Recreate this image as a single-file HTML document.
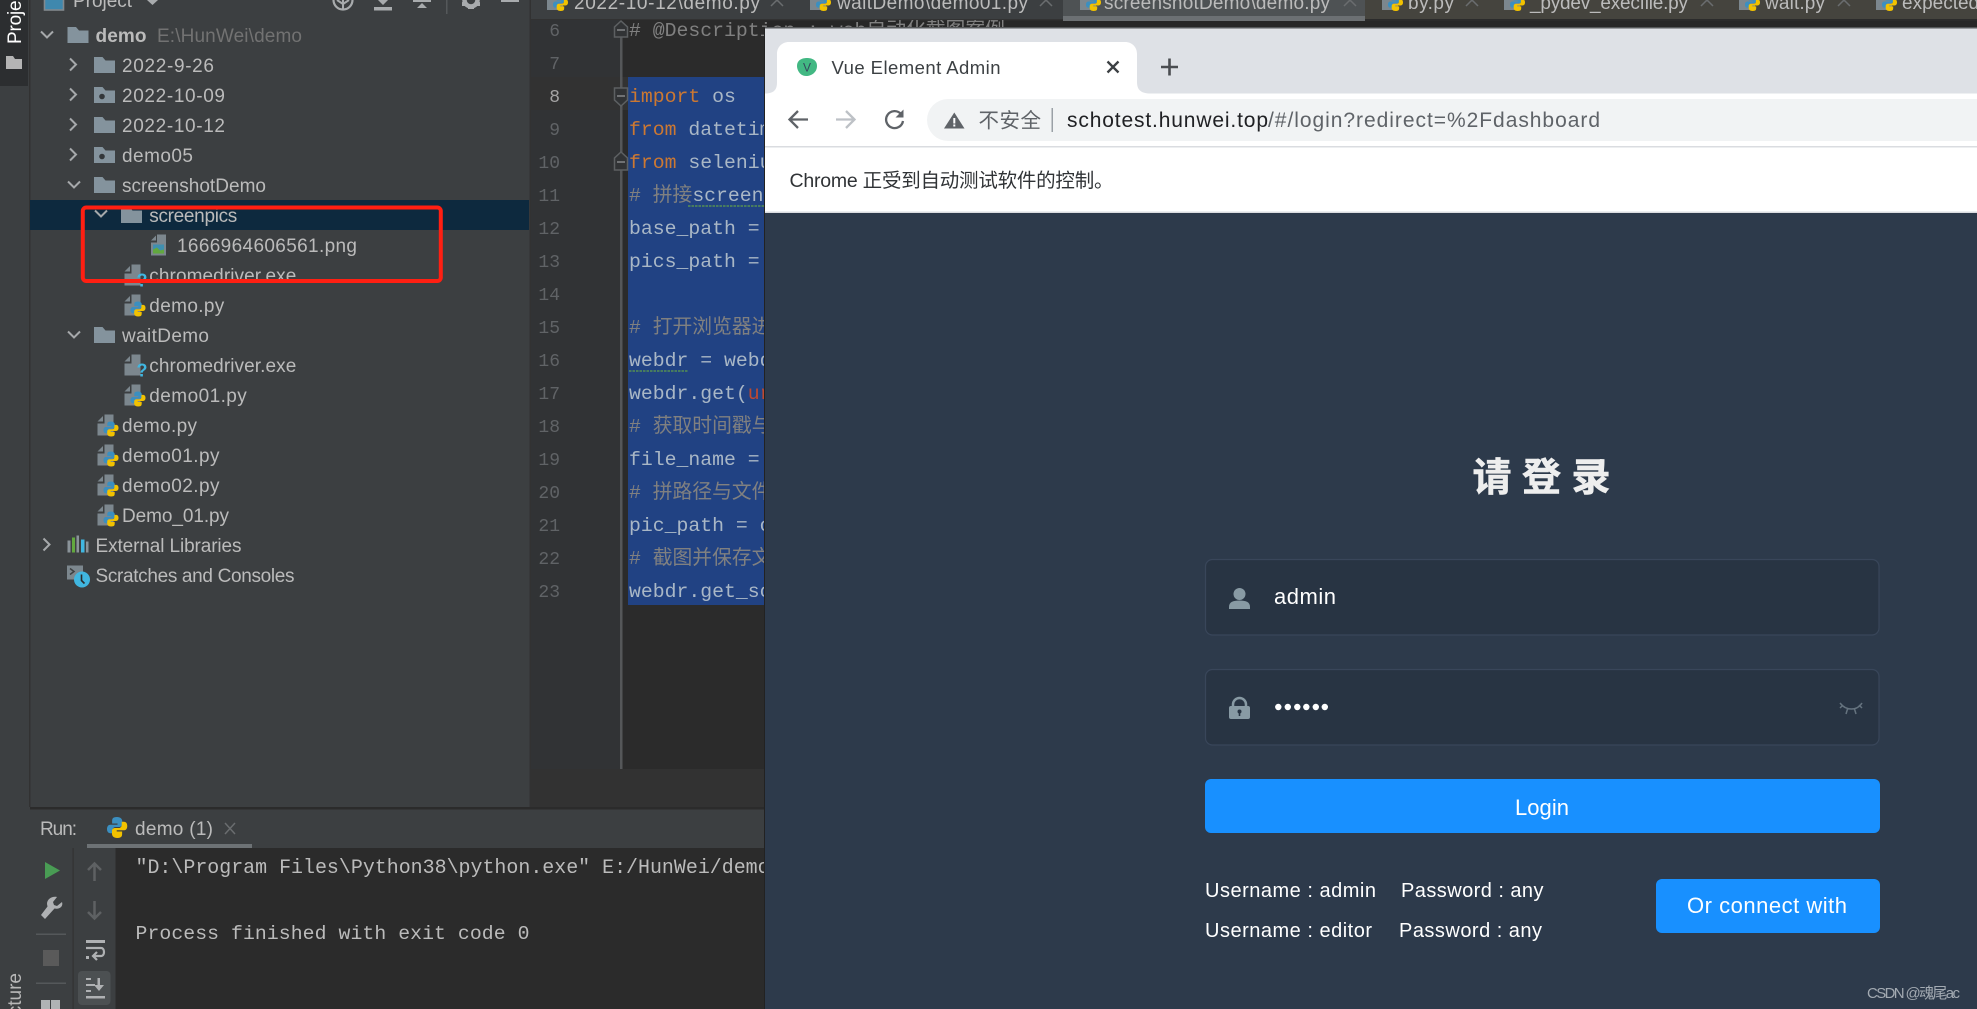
<!DOCTYPE html>
<html lang="zh">
<head>
<meta charset="utf-8">
<title>Vue Element Admin</title>
<style>
html,body{margin:0;padding:0;background:#3c3f41;width:1977px;height:1009px;overflow:hidden}
svg{display:block}
text{white-space:pre}
.s{font-family:"Liberation Sans","Noto Sans CJK SC",sans-serif}
.m{font-family:"Liberation Mono","Noto Sans CJK SC",monospace;font-size:19.8px}
.t{font-size:19px;fill:#bbbbbb}
.n{font-family:"Liberation Mono",monospace;font-size:18px;fill:#606366;text-anchor:end}
.c{fill:#a9b7c6}.k{fill:#cc7832}.g{fill:#808080}
</style>
</head>
<body>
<svg width="1977" height="1009" viewBox="0 0 1977 1009" xmlns="http://www.w3.org/2000/svg">
<defs>
<g id="logo">
<path fill="#3b8fc0" d="M7.4 0C4 0 3.8 1.5 3.8 3v1.6h4v.9H2.5C1 5.5 0 6.6 0 8.6c0 2 1 3 2.5 3h1.6V9.4c0-1.3 1-2.3 2.2-2.3h3c1.1 0 2-1 2-2V3c0-1.6-1.300-3-3.900-3z"/>
<path fill="#f2c200" transform="rotate(180 7.500 7.500)" d="M7.400 0C4 0 3.800 1.500 3.800 3v1.600h4v.9H2.500C1 5.500 0 6.600 0 8.600c0 2 1 3 2.500 3h1.600V9.400c0-1.300 1-2.300 2.200-2.300h3c1.100 0 2-1 2-2V3c0-1.600-1.300-3-3.900-3z"/>
</g>
<g id="file"><path fill="#7c878e" d="M7 0h9v21H0V9h7z"/><path fill="#7c878e" d="M0 7l5.500-5.500V7z"/></g>
<g id="py"><use href="#file"/><use href="#logo" transform="translate(6 7)"/></g>
<g id="q"><use href="#file"/><text x="12" y="22" class="s" font-size="18" font-weight="bold" fill="#40b6e0">?</text></g>
<path id="fo" fill="#84939d" d="M0 0h8.500l3 3.500H21V16H0z"/>
<g id="fd"><use href="#fo"/><circle cx="8" cy="9.500" r="2.800" fill="#33373a"/></g>
<path id="dn" fill="none" stroke="#a6a9ab" stroke-width="2" d="M-6-3L0 3L6-3"/>
<path id="rt" fill="none" stroke="#a6a9ab" stroke-width="2" d="M-3-6L3 0L-3 6"/>
</defs>

<rect width="1977" height="1009" fill="#3c3f41"/>
<rect x="0" y="0" width="28" height="86" fill="#2c2e30"/>
<rect x="29" y="0" width="1.500" height="807" fill="#323232"/>
<text class="s" font-size="19" fill="#ffffff" textLength="58" transform="translate(21 44) rotate(-90)">Project</text>
<path fill="#b4b4b4" d="M6 56h7l2 3h7v10H6z"/>
<text class="s" font-size="19" fill="#b8b8b8" text-anchor="end" transform="translate(21 973) rotate(-90)">Structure</text>

<!-- project header -->
<rect x="44.500" y="-8" width="19" height="18" fill="#3f88ae" stroke="#82898e" stroke-width="1.600"/>
<text x="73" y="7" class="s t" textLength="59">Project</text>
<path fill="#a8abad" d="M147 0h11l-5.500 5z"/>
<circle cx="343" cy="0" r="9.500" fill="none" stroke="#a8abad" stroke-width="2.200"/><path fill="none" stroke="#a8abad" stroke-width="2" d="M343 0v10M337 0L343 4L349 0"/>
<path fill="#a8abad" d="M378 0h10l-5 5zM374 7h18v3.500H374z"/>
<path fill="#a8abad" d="M413 0h18v2H413zM417 8l5-5 5 5z"/>
<rect x="446" y="0" width="1.500" height="14" fill="#55585a"/>
<circle cx="471" cy="0" r="6.500" fill="none" stroke="#a8abad" stroke-width="4.500"/><path fill="#a8abad" d="M468 5h6v4h-6zM476 3l4-1 0 4-3 0zM466 3l-4-1 0 4 3 0z"/>
<rect x="501" y="0" width="18" height="2" fill="#a8abad"/>

<!-- tree -->
<rect x="30" y="200" width="499" height="30" fill="#0d293e"/>
<g transform="translate(0 -0.5)">
<use href="#dn" x="47" y="35"/><use href="#fo" x="67.500" y="27.500"/>
<text x="95.500" y="42.500" class="s t" font-weight="bold" textLength="51">demo</text>
<text x="157" y="42.500" class="s t" style="fill:#727272" textLength="145">E:\HunWei\demo</text>

<use href="#rt" x="73" y="65"/><use href="#fo" x="94" y="57.500"/>
<text x="122" y="72.500" class="s t" textLength="92">2022-9-26</text>
<use href="#rt" x="73" y="95"/><use href="#fd" x="94" y="87.500"/>
<text x="122" y="102.500" class="s t" textLength="103">2022-10-09</text>
<use href="#rt" x="73" y="125"/><use href="#fo" x="94" y="117.500"/>
<text x="122" y="132.500" class="s t" textLength="103">2022-10-12</text>
<use href="#rt" x="73" y="155"/><use href="#fd" x="94" y="147.500"/>
<text x="122" y="162.500" class="s t" textLength="71">demo05</text>
<use href="#dn" x="74" y="185"/><use href="#fo" x="94" y="177.500"/>
<text x="122" y="192.500" class="s t" textLength="144">screenshotDemo</text>
<use href="#dn" x="101" y="214"/><use href="#fo" x="121" y="207.500"/>
<text x="149.300" y="222.500" class="s t" textLength="88">screenpics</text>
<path fill="#7c878e" d="M157 235h9v21h-15v-13h6z"/>
<path fill="#7c878e" d="M151 241l5-5v5z"/>
<rect x="153" y="245" width="11" height="9" fill="#3f8fb0"/><path fill="#62a83f" d="M153 254v-4l4-2 3 3 4-1v4z"/>
<text x="177" y="252.500" class="s t" textLength="180">1666964606561.png</text>
<use href="#q" x="124.500" y="265"/>
<text x="149.300" y="282.500" class="s t" textLength="147">chromedriver.exe</text>
<use href="#py" x="124.500" y="295"/>
<text x="149.300" y="312.500" class="s t" textLength="75">demo.py</text>
<use href="#dn" x="74" y="335"/><use href="#fo" x="94" y="327.500"/>
<text x="122" y="342.500" class="s t" textLength="87">waitDemo</text>
<use href="#q" x="124.500" y="355"/>
<text x="149.300" y="372.500" class="s t" textLength="147">chromedriver.exe</text>
<use href="#py" x="124.500" y="385"/>
<text x="149.300" y="402.500" class="s t" textLength="97.500">demo01.py</text>
<use href="#py" x="97.500" y="415"/>
<text x="122" y="432.500" class="s t" textLength="75">demo.py</text>
<use href="#py" x="97.500" y="445"/>
<text x="122" y="462.500" class="s t" textLength="97.500">demo01.py</text>
<use href="#py" x="97.500" y="475"/>
<text x="122" y="492.500" class="s t" textLength="97.500">demo02.py</text>
<use href="#py" x="97.500" y="505"/>
<text x="122" y="522.500" class="s t" textLength="107">Demo_01.py</text>
<use href="#rt" x="46.500" y="545"/>
<path fill="#8a9399" d="M67.500 541h3v12h-3zM82 541h2v12h-2zM86 542h2.500v11H86z"/><rect x="72" y="538" width="3" height="15" fill="#62a83f"/><rect x="76.500" y="536" width="2.500" height="17" fill="#8a9399"/><rect x="81" y="540" width="3.500" height="13" fill="#40b6e0"/>
<text x="95.500" y="552.500" class="s t" textLength="146">External Libraries</text>
<path fill="#7c878e" d="M67 566h16v9h-6v5H67z"/><path fill="none" stroke="#3c3f41" stroke-width="1.500" d="M70 569l4 3-4 3"/>
<circle cx="82" cy="580" r="8" fill="#40b6e0"/><path fill="none" stroke="#2b2b2b" stroke-width="1.600" d="M81.500 575v6l3 3"/>
<text x="95.500" y="582.500" class="s t" textLength="199">Scratches and Consoles</text>
</g>
<!-- red annotation -->
<rect x="82.800" y="207.500" width="358" height="73.500" rx="3.500" fill="none" stroke="#ff1f12" stroke-width="4"/>

<!-- editor -->
<rect x="530" y="19" width="1447" height="790" fill="#2b2b2b"/>
<rect x="765" y="21" width="1212" height="7" fill="#272727"/>
<rect x="530" y="19" width="90" height="750" fill="#313335"/>
<rect x="621" y="77" width="7" height="33" fill="#323232"/>
<rect x="530" y="77" width="90" height="33" fill="#323232"/>
<rect x="530" y="769" width="235" height="38" fill="#323232"/>
<rect x="620" y="37" width="2.500" height="732" fill="#555759"/>
<rect x="628" y="77" width="140" height="528" fill="#214283"/>

<g class="n">
<text x="560" y="36" class="n">6</text><text x="560" y="69" class="n">7</text><text x="560" y="102" class="n" style="fill:#a4a3a3">8</text><text x="560" y="135" class="n">9</text><text x="560" y="168" class="n">10</text><text x="560" y="201" class="n">11</text><text x="560" y="234" class="n">12</text><text x="560" y="267" class="n">13</text><text x="560" y="300" class="n">14</text><text x="560" y="333" class="n">15</text><text x="560" y="366" class="n">16</text><text x="560" y="399" class="n">17</text><text x="560" y="432" class="n">18</text><text x="560" y="465" class="n">19</text><text x="560" y="498" class="n">20</text><text x="560" y="531" class="n">21</text><text x="560" y="564" class="n">22</text><text x="560" y="597" class="n">23</text>
</g>
<g fill="#313335" stroke="#5d6062" stroke-width="1.500">
<path d="M614.500 37V27l6.500-6 6.500 6v10z"/>
<path d="M614.500 88v12l6.500 6 6.500-6V88z"/>
<path d="M614.500 170v-12l6.500-6 6.500 6v12z"/>
</g>
<path stroke="#85888a" stroke-width="1.500" d="M617 30h8M617 96h8M617 162h8"/>

<g class="m">
<text x="629" y="36" class="m g"># @Description : web自动化截图案例</text>
<text x="629" y="102" class="m c"><tspan class="k">import</tspan> os</text>
<text x="629" y="135" class="m c"><tspan class="k">from</tspan> datetime import datetime</text>
<text x="629" y="168" class="m c"><tspan class="k">from</tspan> selenium import webdriver</text>
<text x="629" y="201" class="m g"># 拼接<tspan class="c">screenpics</tspan></text>
<text x="629" y="234" class="m c">base_path = os.path</text>
<text x="629" y="267" class="m c">pics_path = os.path</text>
<text x="629" y="333" class="m g"># 打开浏览器进入</text>
<text x="629" y="366" class="m c">webdr = webdriver</text>
<text x="629" y="399" class="m c">webdr.get(<tspan fill="#c0492f">url</tspan>)</text>
<text x="629" y="432" class="m g"># 获取时间戳与</text>
<text x="629" y="465" class="m c">file_name = str</text>
<text x="629" y="498" class="m g"># 拼路径与文件</text>
<text x="629" y="531" class="m c">pic_path = os.path</text>
<text x="629" y="564" class="m g"># 截图并保存文件</text>
<text x="629" y="597" class="m c">webdr.get_screenshot</text>
</g>
<path fill="none" stroke="#5f9e4a" stroke-width="1.200" stroke-dasharray="2.500 1" d="M688 206H765M629 371H688"/>

<!-- editor tabs -->
<rect x="530" y="0" width="533" height="19" fill="#3c3f41"/>
<rect x="1063" y="0" width="302" height="16" fill="#4e5254"/>
<rect x="1063" y="16" width="302" height="5" fill="#6c7073"/>
<rect x="1365" y="0" width="612" height="19" fill="#45443e"/>
<rect x="530" y="19" width="533" height="1" fill="#323232"/>
<rect x="529.500" y="0" width="1.500" height="807" fill="#323232"/>
<g>
<use href="#py" x="547" y="-11"/><text x="574" y="9" class="s t" textLength="186">2022-10-12\demo.py</text>
<use href="#py" x="810" y="-11"/><text x="837" y="9" class="s t" textLength="191">waitDemo\demo01.py</text>
<use href="#py" x="1080" y="-11"/><text x="1104" y="9" class="s t" textLength="226">screenshotDemo\demo.py</text>
<use href="#py" x="1382" y="-11"/><text x="1408" y="9" class="s t" textLength="46">by.py</text>
<use href="#py" x="1504" y="-11"/><text x="1530" y="9" class="s t" textLength="158">_pydev_execfile.py</text>
<use href="#py" x="1739" y="-11"/><text x="1765" y="9" class="s t" textLength="60">wait.py</text>
<use href="#py" x="1876" y="-11"/><text x="1902" y="9" class="s t">expected</text>
</g>
<path fill="none" stroke="#6a6d6f" stroke-width="1.500" d="M771 6l6-6 6 6M1040 6l6-6 6 6M1344 6l6-6 6 6M1466 6l6-6 6 6M1701 6l6-6 6 6M1838 6l6-6 6 6"/>

<!-- run panel -->
<rect x="30" y="807" width="735" height="2.500" fill="#2b2b2b"/>
<rect x="30" y="809.500" width="735" height="200" fill="#3c3f41"/>
<text x="40" y="835" class="s t" textLength="37">Run:</text>
<use href="#logo" transform="translate(107 817) scale(1.350 1.400)"/>
<text x="135" y="835" class="s t" textLength="78">demo (1)</text>
<path stroke="#6a6d6f" stroke-width="1.500" d="M225 823l10 11M235 823l-10 11"/>
<rect x="87" y="844" width="165" height="4" fill="#6d7275"/>
<rect x="72.500" y="848" width="1.200" height="161" fill="#323232"/>
<rect x="115.500" y="848" width="650" height="161" fill="#2b2b2b"/>
<path fill="#499c54" d="M45 862l15 8.500-15 8.500z"/>
<path fill="#afb1b3" d="M62 902l-5 4-3-1-1-3 4-5c-5-1-10 2-10 7l.5 2.500L41 915l4 4 9.500-10.500c5 1 9-2 7.500-6.500z"/>
<rect x="36" y="933.500" width="30" height="1.500" fill="#55585a"/>
<rect x="43" y="950" width="16" height="16" fill="#5a5a5a"/>
<rect x="36" y="982.500" width="30" height="1.500" fill="#55585a"/>
<path fill="#b0b3b5" d="M41 1000h9v9h-9zM51 1000h9v9h-9z"/>
<path fill="none" stroke="#5e6163" stroke-width="2.500" d="M94.500 881v-17M88 870l6.500-6.500 6.500 6.500M94.500 901v17M88 912l6.500 6.500 6.500-6.500"/>
<path fill="#afb1b3" d="M86 940h19v3H86zM86 956h3v3h-3z"/>
<path fill="none" stroke="#afb1b3" stroke-width="2.200" d="M86 948h15c4 0 4 8 0 8h-8M97 952l-4 4 4 4"/>
<rect x="78" y="971" width="32.500" height="34" rx="4" fill="#4c5052"/>
<path fill="#afb1b3" d="M86 978h5v2h-5zM86 984h9v2h-9zM86 990h5v2h-5zM86 996h19v2.500H86z"/>
<path fill="#afb1b3" d="M97.500 978h2.500v7h4l-5 6-5-6h3.500z"/>
<text x="135.500" y="873" class="m" style="fill:#bbbbbb;font-size:19.95px">"D:\Program Files\Python38\python.exe" E:/HunWei/demo</text>
<text x="135.500" y="939" class="m" style="fill:#bbbbbb" textLength="394">Process finished with exit code 0</text>
<rect x="764" y="28" width="1.200" height="981" fill="#222"/>

<!-- browser -->
<rect x="765" y="27" width="1212" height="1.500" fill="#55585a"/>
<rect x="765" y="28.500" width="1212" height="65" fill="#dee1e6"/>
<path fill="#ffffff" d="M765 93.500c8 0 12-3 12-11V54c0-7 5-12 12-12h336c7 0 12 5 12 12v28c0 8 4 11 12 11.500z"/>
<path fill="#42b883" d="M807 58c5 0 10 2 10 8 0 6-5 10-11 10-6 0-9-6-9-10 0-6 5-8 10-8z"/>
<text x="803" y="71.500" class="s" font-size="12" fill="#35495e">V</text>
<text x="831.500" y="74" class="s" font-size="18.500" fill="#3c4043" textLength="169">Vue Element Admin</text>
<path stroke="#3c4043" stroke-width="2.300" d="M1107.500 61.500l11 11M1118.500 61.500l-11 11"/>
<path stroke="#4a4d51" stroke-width="2.600" d="M1161 67h17M1169.500 58.500v17"/>

<rect x="765" y="93.500" width="1212" height="53" fill="#ffffff"/>
<rect x="765" y="146" width="1212" height="1.500" fill="#dadce0"/>
<path d="M948 99H1977V141H948a21 21 0 0 1 0-42z" fill="#f1f3f4"/>
<path fill="none" stroke="#5f6368" stroke-width="2.300" d="M808 119.500H790M798 111l-8.500 8.500L798 128"/>
<path fill="none" stroke="#bdc1c6" stroke-width="2.300" d="M836 119.500h18M846 111l8.500 8.500L846 128"/>
<path fill="none" stroke="#5f6368" stroke-width="2.300" d="M901 114a8.500 8.500 0 1 0 2 7"/>
<path fill="#5f6368" d="M903.500 109.500v8h-8z"/>
<path fill="#5f6368" d="M954.300 112.500L964.500 128.500H944z"/>
<rect x="953.300" y="118" width="2" height="5.500" fill="#fff"/><rect x="953.300" y="124.500" width="2" height="2" fill="#fff"/>
<text x="978.500" y="127.500" class="s" font-size="20.500" fill="#5f6368" textLength="62.500">不安全</text>
<rect x="1051.500" y="108" width="1.500" height="24" fill="#9aa0a6"/>
<text x="1067" y="127" class="s" font-size="21" fill="#202124" textLength="201">schotest.hunwei.top</text>
<text x="1268" y="127" class="s" font-size="21" fill="#5f6368" textLength="332">/#/login?redirect=%2Fdashboard</text>

<rect x="765" y="147.500" width="1212" height="65" fill="#ffffff"/>
<rect x="765" y="211.500" width="1212" height="1.500" fill="#dadce0"/>
<text x="789.500" y="187" class="s" font-size="19.500" fill="#303336" textLength="324">Chrome 正受到自动测试软件的控制。</text>

<rect x="765" y="213" width="1212" height="796" fill="#2d3a4b"/>
<text x="1472.500" y="491" font-family='"Noto Sans CJK SC",sans-serif' font-size="39" font-weight="700" fill="#eeeeee" stroke="#eeeeee" stroke-width="0.6" letter-spacing="10.500">请登录</text>

<rect x="1205.500" y="559.500" width="673.500" height="75.500" rx="7" fill="#283443" stroke="#39465a" stroke-width="1.200"/>
<rect x="1205.500" y="669.500" width="673.500" height="75.500" rx="7" fill="#283443" stroke="#39465a" stroke-width="1.200"/>
<circle cx="1239.500" cy="594" r="6" fill="#889aa4"/>
<path fill="#889aa4" d="M1229 609v-2c0-5 4-6.500 10.500-6.500s10.500 1.500 10.500 6.500v2z"/>
<text x="1274" y="604" class="s" font-size="22" fill="#ffffff" textLength="62">admin</text>
<path fill="none" stroke="#889aa4" stroke-width="2.500" d="M1233 708v-3.500a6.500 6.500 0 0 1 13 0v3.500"/>
<rect x="1229" y="706" width="21" height="13" rx="2" fill="#889aa4"/>
<circle cx="1239.500" cy="711.500" r="2" fill="#283443"/><rect x="1238.700" y="712" width="1.600" height="4" fill="#283443"/>
<g fill="#ffffff"><circle cx="1278.300" cy="707" r="3.200"/><circle cx="1287.800" cy="707" r="3.200"/><circle cx="1297.300" cy="707" r="3.200"/><circle cx="1306.300" cy="707" r="3.200"/><circle cx="1315.800" cy="707" r="3.200"/><circle cx="1324.800" cy="707" r="3.200"/></g>
<path fill="none" stroke="#65737f" stroke-width="1.500" d="M1840 703c6 8 17 8 22 0M1840 708l3-3M1862 708l-3-3M1846 714l1.500-5M1856 714l-1.500-5"/>

<rect x="1205" y="779" width="675" height="54" rx="6" fill="#1890ff"/>
<text x="1515" y="815" class="s" font-size="22" fill="#ffffff" textLength="54">Login</text>

<text x="1205" y="897" class="s" font-size="20" fill="#ffffff" textLength="171">Username : admin</text>
<text x="1401" y="897" class="s" font-size="20" fill="#ffffff" textLength="142.500">Password : any</text>
<text x="1205" y="937" class="s" font-size="20" fill="#ffffff" textLength="167">Username : editor</text>
<text x="1399" y="937" class="s" font-size="20" fill="#ffffff" textLength="143">Password : any</text>
<rect x="1656" y="879" width="224" height="54" rx="6" fill="#1890ff"/>
<text x="1687" y="913" class="s" font-size="22" fill="#ffffff" textLength="160">Or connect with</text>
<text x="1867" y="998" class="s" font-size="15" fill="#a3aab2" textLength="93">CSDN @魂尾ac</text>
</svg>
</body>
</html>
